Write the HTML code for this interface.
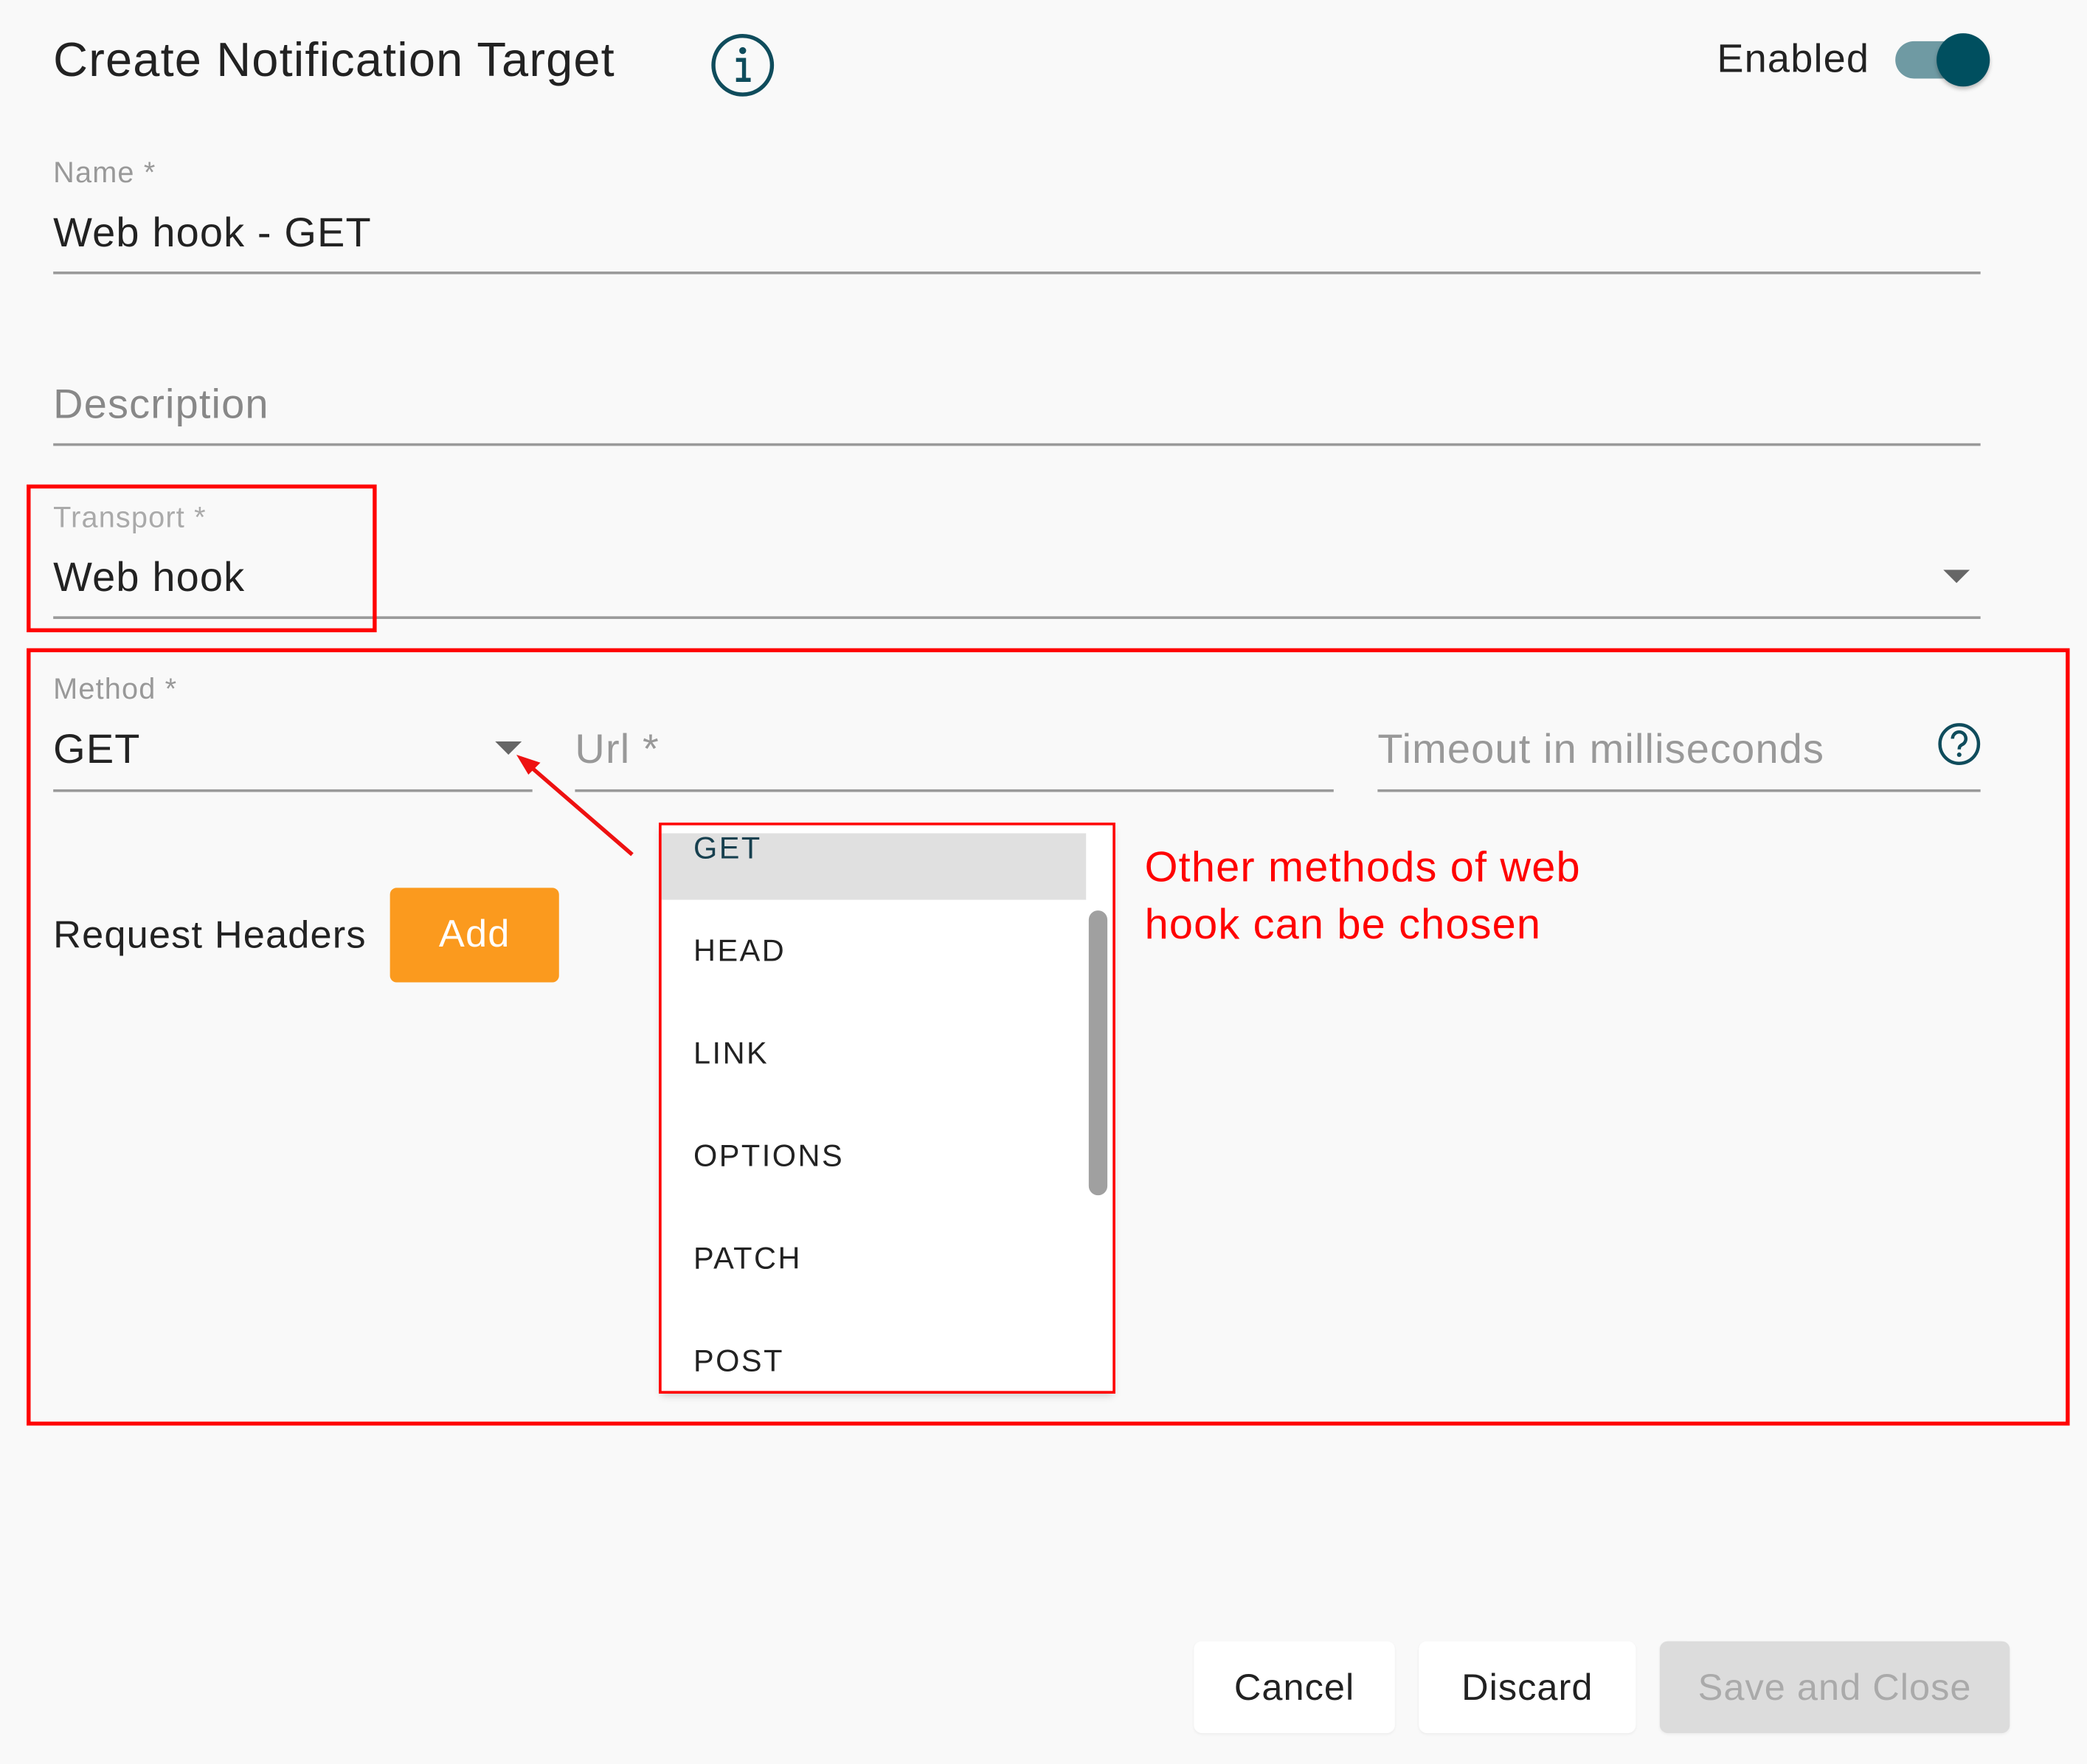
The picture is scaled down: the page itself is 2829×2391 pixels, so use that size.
<!DOCTYPE html>
<html><head><meta charset="utf-8"><style>
html,body{margin:0;padding:0;background:#f9f9f9;}
body{width:2829px;height:2391px;overflow:hidden;position:relative;}
#w{position:absolute;left:0;top:0;width:1568px;height:1325px;transform:scale(1.8042);transform-origin:0 0;font-family:"Liberation Sans",sans-serif;letter-spacing:0.04em;}
.a{position:absolute;white-space:nowrap;line-height:1;}
.l{position:absolute;height:2px;background:#9a9a9a;}
.rb{position:absolute;border:3px solid #f00;box-sizing:border-box;}
.it{position:absolute;left:521px;font-size:23px;color:#222;line-height:1;letter-spacing:0.06em;}
.btn{position:absolute;top:1233px;height:69px;border-radius:6px;background:#fff;font-size:28px;color:#222;display:flex;align-items:center;justify-content:center;box-shadow:0 1px 2px rgba(0,0,0,.05);letter-spacing:0.02em;}
</style></head><body><div id="w">
<div class="a" style="left:40px;top:27px;font-size:36px;color:#222;">Create Notification Target</div>
<svg class="a" style="left:533px;top:24px" width="50" height="50"><circle cx="25" cy="25" r="22" fill="none" stroke="#0f4c5c" stroke-width="3"/><circle cx="25" cy="14" r="2.6" fill="#0f4c5c"/><path d="M20 21h6v14M20 36h11" stroke="#0f4c5c" stroke-width="3" fill="none"/></svg>
<div class="a" style="left:1290px;top:30px;font-size:30px;color:#222;">Enabled</div>
<div class="a" style="left:1424px;top:31px;width:62px;height:28px;border-radius:14px;background:#6f9aa3;"></div>
<div class="a" style="left:1455px;top:25px;width:40px;height:40px;border-radius:50%;background:#004f5f;box-shadow:0 2px 3px rgba(0,0,0,.25);"></div>

<div class="a" style="left:40px;top:119px;font-size:22px;color:#999;">Name *</div>
<div class="a" style="left:40px;top:159px;font-size:31px;color:#222;">Web hook - GET</div>
<div class="l" style="left:40px;top:204px;width:1448px;"></div>

<div class="a" style="left:40px;top:288px;font-size:31px;color:#888;">Description</div>
<div class="l" style="left:40px;top:333px;width:1448px;"></div>

<div class="a" style="left:40px;top:378px;font-size:22px;color:#aaa;">Transport *</div>
<div class="a" style="left:40px;top:418px;font-size:31px;color:#222;">Web hook</div>
<svg class="a" style="left:1460px;top:428px" width="20" height="11"><path d="M0 0h20L10 10z" fill="#666"/></svg>
<div class="l" style="left:40px;top:463px;width:1448px;"></div>
<div class="rb" style="left:20px;top:364px;width:263px;height:111px;"></div>

<div class="rb" style="left:20px;top:487px;width:1535px;height:584px;"></div>
<div class="a" style="left:40px;top:507px;font-size:22px;color:#999;">Method *</div>
<div class="a" style="left:40px;top:547px;font-size:31px;color:#222;">GET</div>
<svg class="a" style="left:372px;top:557px" width="20" height="11"><path d="M0 0h20L10 10z" fill="#666"/></svg>
<div class="l" style="left:40px;top:593px;width:360px;"></div>
<div class="a" style="left:432px;top:547px;font-size:31px;color:#999;">Url *</div>
<div class="l" style="left:432px;top:593px;width:570px;"></div>
<div class="a" style="left:1035px;top:547px;font-size:31px;color:#999;">Timeout in milliseconds</div>
<svg class="a" style="left:1455px;top:542px" width="34" height="34"><circle cx="17" cy="17" r="14.5" fill="none" stroke="#0f4c5c" stroke-width="2.5"/><path d="M12 13a5 5 0 1 1 7 4.5c-1.5.8-2 1.6-2 3.5" fill="none" stroke="#0f4c5c" stroke-width="2.5"/><circle cx="17" cy="25" r="1.7" fill="#0f4c5c"/></svg>
<div class="l" style="left:1035px;top:593px;width:453px;"></div>

<svg class="a" style="left:380px;top:560px" width="100" height="90"><path d="M95 82L14 12" stroke="#e11" stroke-width="3"/><path d="M8 7l18 6-9 9z" fill="#e11"/></svg>

<div class="a" style="left:40px;top:689px;font-size:29px;color:#222;">Request Headers</div>
<div class="a" style="left:293px;top:667px;width:127px;height:71px;border-radius:5px;background:#fb9a1e;color:#fff;font-size:29px;display:flex;align-items:center;justify-content:center;">Add</div>

<div class="a" style="left:497px;top:620px;width:339px;height:425px;background:#fff;box-shadow:0 3px 6px rgba(0,0,0,.2);overflow:hidden;">
<div style="position:absolute;left:0;top:6px;width:319px;height:50px;background:#e0e0e0;"></div>
<div style="position:absolute;left:321px;top:64px;width:14px;height:214px;border-radius:7px;background:#a0a0a0;"></div>
</div>
<div class="it" style="top:626px;color:#17404f;">GET</div>
<div class="it" style="top:703px;">HEAD</div>
<div class="it" style="top:780px;">LINK</div>
<div class="it" style="top:857px;">OPTIONS</div>
<div class="it" style="top:934px;">PATCH</div>
<div class="it" style="top:1011px;">POST</div>
<div class="rb" style="left:495px;top:618px;width:343px;height:429px;border-width:2px;"></div>

<div class="a" style="left:860px;top:630px;font-size:32px;color:#f00;line-height:43px;">Other methods of web<br>hook can be chosen</div>

<div class="btn" style="left:897px;width:151px;">Cancel</div>
<div class="btn" style="left:1066px;width:163px;">Discard</div>
<div class="btn" style="left:1247px;width:263px;background:#dcdcdc;color:#aaa;">Save and Close</div>
</div></body></html>
